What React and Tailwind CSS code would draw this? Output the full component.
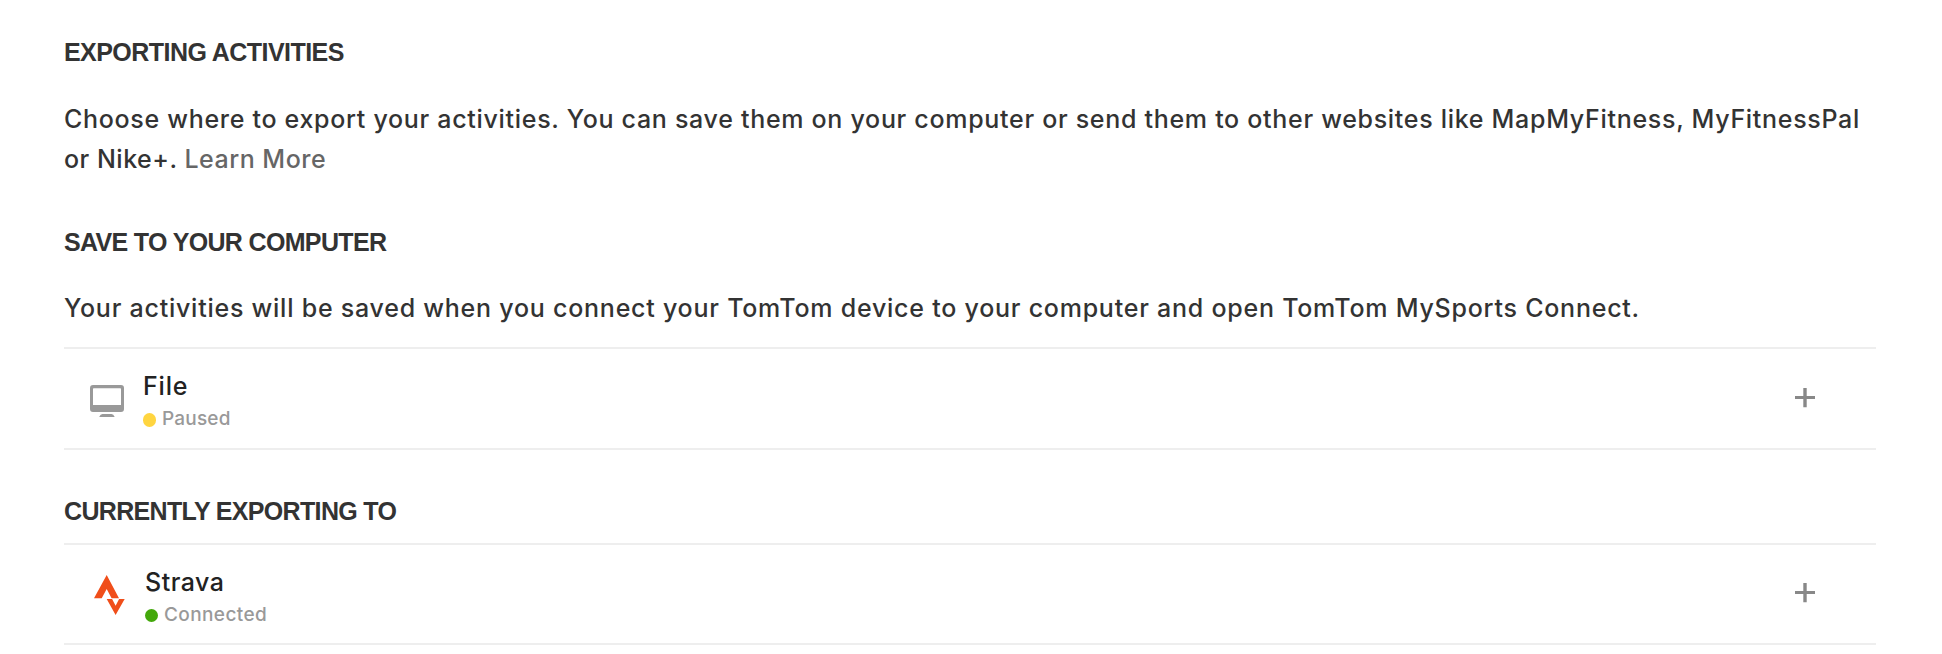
function MonitorIcon() {
  return (
    <svg width="34" height="32" viewBox="0 0 34 32" className="mt-9 ml-[26px] shrink-0">
      <path
        fill="#999"
        fillRule="evenodd"
        d="M3 0h28a3 3 0 0 1 3 3v21a3 3 0 0 1-3 3H3a3 3 0 0 1-3-3V3a3 3 0 0 1 3-3ZM3 4v16h28V4a.7.7 0 0 0-.7-.7H3.700A.7.7 0 0 0 3 4Z"
      />
      <path fill="#999" d="M12.500 29h9q2 0 3.200 3H9.200q1.200-3 3.300-3Z" />
    </svg>
  );
}

function StravaIcon() {
  return (
    <svg width="31" height="40" viewBox="0 0 31 40" className="mt-[30px] ml-[30px] shrink-0">
      <path
        fill="#f04e1a"
        d="M12.700 0 25 23.300h-7.400l-4.900-9.300-5 9.300H0ZM12.700 24h5.400l3.500 6.700 3.500-6.700h5.600l-9.100 16Z"
      />
    </svg>
  );
}

function PlusIcon({ className }) {
  return (
    <svg width="20" height="20" viewBox="0 0 20 20" className={`mr-[61px] ml-auto shrink-0 ${className}`}>
      <path fill="#888" d="M8.300 0h3.400v8.100H20v3h-8.300v8.200H8.300v-8.200H0v-3h8.300Z" />
    </svg>
  );
}

function Heading({ children, className }) {
  return (
    <h2
      className={`h-10 text-[25px] leading-10 font-bold whitespace-nowrap text-[#333] font-['Liberation_Sans',sans-serif] ${className}`}
    >
      {children}
    </h2>
  );
}

function ServiceRow({ icon, name, status, dotClass, textClass, nameClass, statusClass, plusClass, className }) {
  return (
    <div className={`flex items-start border-y-2 border-[#eee] ${className}`}>
      {icon}
      <div className={textClass}>
        <p className={`h-8 text-[25px] leading-8 text-[#222] ${nameClass}`}>{name}</p>
        <div className="mt-px flex h-8 items-center">
          <span className={`mr-1.5 w-[13px] rounded-full ${dotClass}`} />
          <span className={`text-[19px] leading-8 text-[#999] ${statusClass}`}>{status}</span>
        </div>
      </div>
      <PlusIcon className={plusClass} />
    </div>
  );
}

export default function App() {
  return (
    <main className="h-[654px] w-[1942px] overflow-hidden bg-white pt-8 pr-[66px] pl-16 font-[450] font-['Inter',sans-serif]">
      <Heading className="tracking-[-0.55px]">EXPORTING ACTIVITIES</Heading>
      <div className="mt-[27px] text-[25px] leading-10 whitespace-nowrap text-[#333]">
        <p className="tracking-[0.7px]">
          Choose where to export your activities. You can save them on your computer or send them to
          other websites like MapMyFitness, MyFitnessPal
        </p>
        <p className="tracking-[0.5px]">
          or Nike+. <a className="text-[#666]">Learn More</a>
        </p>
      </div>

      <Heading className="mt-[43px] tracking-[-0.66px]">SAVE TO YOUR COMPUTER</Heading>
      <p className="mt-[26px] h-10 text-[25px] leading-10 whitespace-nowrap text-[#333] tracking-[0.76px]">
        Your activities will be saved when you connect your TomTom device to your computer and open
        TomTom MySports Connect.
      </p>
      <ServiceRow
        className="mt-[19px] h-[103px]"
        icon={<MonitorIcon />}
        name="File"
        status="Paused"
        textClass="ml-[19px] mt-[21px]"
        nameClass="tracking-[0.8px]"
        statusClass="tracking-[0.2px]"
        dotClass="mt-0.5 h-[14px] bg-[#ffd540]"
        plusClass="mt-[39px]"
      />

      <Heading className="mt-[41px] tracking-[-0.66px]">CURRENTLY EXPORTING TO</Heading>
      <ServiceRow
        className="mt-3 h-[102px]"
        icon={<StravaIcon />}
        name="Strava"
        status="Connected"
        textClass="ml-5 mt-[21px]"
        nameClass="tracking-[0.5px]"
        statusClass="tracking-[0.4px]"
        dotClass="h-[13px] bg-[#43a80b]"
        plusClass="mt-[38px]"
      />
    </main>
  );
}
